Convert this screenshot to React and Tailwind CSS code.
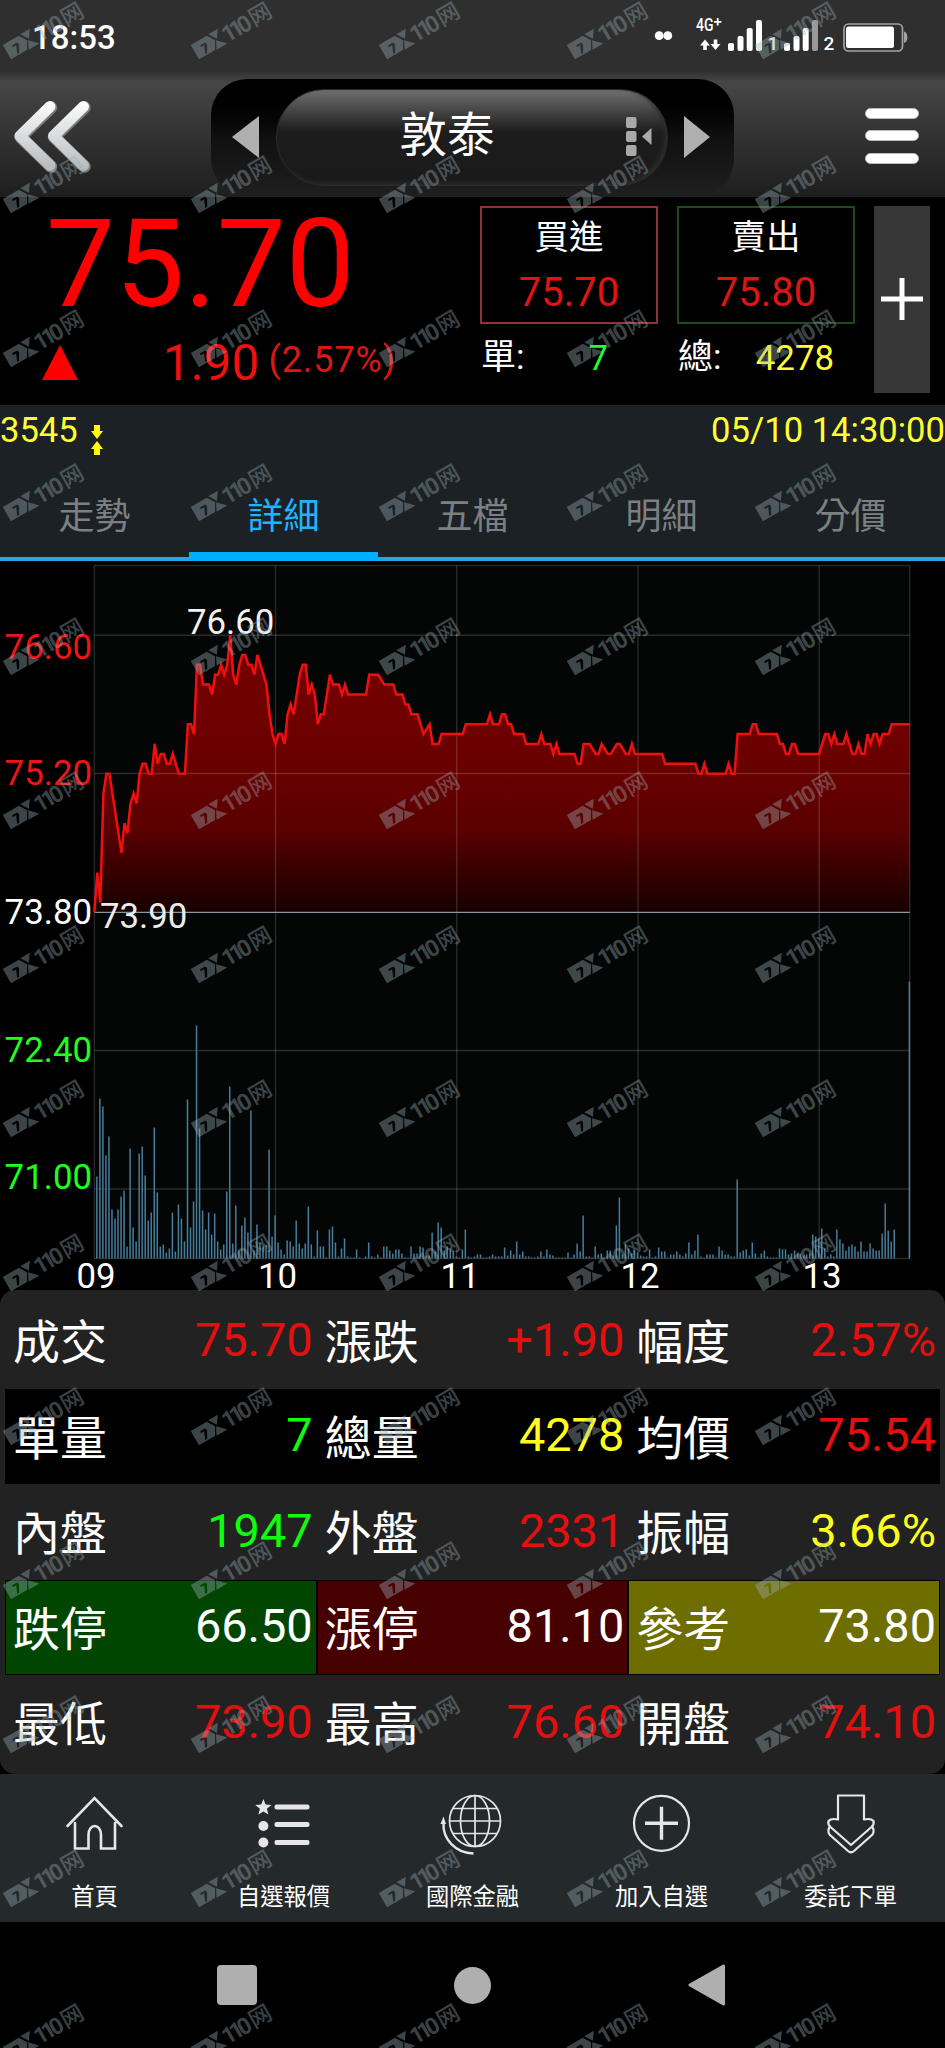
import { Fragment } from 'react'

const TABS = ['走勢', '詳細', '五檔', '明細', '分價']
const ACTIVE_TAB = '詳細'

const RED = 'text-[#e60f0f]'
const GREEN = 'text-[#0dff0d]'
const YELLOW = 'text-[#ffff1e]'
const WHITE = 'text-white'

const ROWS = [
  { cls: '', cells: [
    { label: '成交', value: '75.70', color: RED },
    { label: '漲跌', value: '+1.90', color: RED },
    { label: '幅度', value: '2.57%', color: RED },
  ] },
  { cls: 'bg-black', cells: [
    { label: '單量', value: '7', color: GREEN },
    { label: '總量', value: '4278', color: YELLOW },
    { label: '均價', value: '75.54', color: RED },
  ] },
  { cls: '', cells: [
    { label: '內盤', value: '1947', color: GREEN },
    { label: '外盤', value: '2331', color: RED },
    { label: '振幅', value: '3.66%', color: YELLOW },
  ] },
  { cls: 'bg-black', cells: [
    { label: '跌停', value: '66.50', color: WHITE, bg: 'border border-black bg-[#004600]' },
    { label: '漲停', value: '81.10', color: WHITE, bg: 'border border-black bg-[#460000]' },
    { label: '參考', value: '73.80', color: WHITE, bg: 'border border-black bg-[#6e6e00]' },
  ] },
  { cls: '', cells: [
    { label: '最低', value: '73.90', color: RED },
    { label: '最高', value: '76.60', color: RED },
    { label: '開盤', value: '74.10', color: RED },
  ] },
]

// [minutes since 09:00, price]
const PRICES = [
  [0, 73.8], [1, 74.2], [2, 73.9], [3, 75], [4, 75.2], [5, 75.2], [9, 74.4], [10, 74.7], [11, 74.6], [12, 74.9],
  [13, 75], [14, 74.9], [15, 75.2], [16, 75.3], [17, 75.3], [18, 75.2], [19, 75.2], [20, 75.5], [21, 75.3], [22, 75.4],
  [23, 75.4], [24, 75.3], [25, 75.3], [26, 75.4], [27, 75.3], [28, 75.2], [30, 75.2], [31, 75.7], [32, 75.7], [33, 75.6],
  [34, 76.3], [35, 76.3], [36, 76.1], [38, 76.1], [39, 76], [40, 76.2], [41, 76.2], [42, 76.3], [43, 76.2], [44, 76.3],
  [45, 76.6], [46, 76.2], [47, 76.1], [48, 76.3], [49, 76.4], [50, 76.4], [51, 76.3], [52, 76.3], [53, 76.2], [54, 76.4],
  [57, 76.1], [58, 75.8], [59, 75.6], [60, 75.5], [61, 75.6], [62, 75.6], [63, 75.5], [64, 75.8], [65, 75.9], [66, 75.8],
  [67, 76], [68, 76.2], [69, 76.3], [70, 76.3], [71, 76], [72, 76.1], [73, 76], [74, 75.7], [75, 75.8], [76, 75.8],
  [77, 76], [78, 76.2], [79, 76.1], [81, 76.1], [82, 76], [83, 76.1], [84, 76], [90, 76], [91, 76.2], [94, 76.2],
  [96, 76.1], [99, 76.1], [100, 76], [102, 76], [103, 75.9], [104, 75.9], [105, 75.8], [107, 75.8], [109, 75.6], [111, 75.7],
  [112, 75.5], [114, 75.5], [115, 75.6], [122, 75.6], [123, 75.7], [130, 75.7], [131, 75.8], [132, 75.7], [134, 75.7],
  [135, 75.8], [136, 75.8], [137, 75.7], [138, 75.7], [139, 75.6], [142, 75.6], [143, 75.5], [147, 75.5], [148, 75.6],
  [149, 75.5], [151, 75.5], [152, 75.4], [153, 75.5], [154, 75.4], [159, 75.4], [160, 75.3], [161, 75.3], [162, 75.5],
  [164, 75.5], [166, 75.4], [167, 75.4], [168, 75.5], [170, 75.4], [171, 75.4], [173, 75.5], [174, 75.5], [176, 75.4],
  [177, 75.4], [178, 75.5], [179, 75.4], [188, 75.4], [189, 75.3], [199, 75.3], [200, 75.2], [201, 75.2], [202, 75.3],
  [203, 75.2], [209, 75.2], [210, 75.3], [211, 75.2], [212, 75.2], [213, 75.6], [217, 75.6], [218, 75.7], [219, 75.7],
  [220, 75.6], [226, 75.6], [227, 75.5], [228, 75.5], [229, 75.4], [230, 75.4], [231, 75.5], [232, 75.5], [233, 75.4],
  [240, 75.4], [242, 75.6], [243, 75.6], [244, 75.5], [245, 75.6], [246, 75.5], [248, 75.5], [249, 75.6], [251, 75.4],
  [252, 75.4], [253, 75.5], [254, 75.4], [255, 75.4], [256, 75.6], [257, 75.5], [258, 75.6], [259, 75.6], [260, 75.5],
  [261, 75.6], [263, 75.6], [264, 75.7], [270, 75.7],
]

// one bar per minute, starting at 09:01
const VOLUMES = [
  82, 160, 152, 103, 122, 49, 40, 49, 62, 68, 12, 110, 31, 17, 105, 112, 83, 38, 46, 131,
  66, 12, 14, 6, 10, 46, 7, 54, 40, 17, 159, 31, 57, 233, 130, 48, 29, 46, 24, 45,
  17, 9, 14, 67, 172, 15, 53, 8, 33, 41, 26, 148, 8, 34, 15, 12, 13, 109, 22, 43,
  16, 9, 4, 18, 17, 12, 38, 15, 10, 15, 52, 14, 2, 28, 12, 12, 1, 29, 32, 16,
  2, 10, 20, 2, 1, 1, 9, 1, 0, 2, 16, 2, 1, 4, 1, 12, 12, 8, 5, 9,
  9, 5, 1, 1, 12, 5, 5, 12, 11, 3, 3, 26, 7, 36, 31, 8, 12, 10, 8, 2,
  1, 9, 29, 2, 1, 2, 4, 4, 1, 1, 2, 4, 2, 2, 2, 11, 3, 8, 4, 17,
  4, 7, 2, 2, 1, 1, 2, 7, 2, 9, 4, 3, 1, 1, 1, 1, 6, 1, 4, 15,
  7, 43, 2, 2, 1, 12, 4, 5, 1, 8, 8, 3, 33, 61, 4, 14, 10, 5, 8, 6,
  3, 2, 2, 9, 1, 2, 11, 7, 7, 1, 4, 4, 7, 4, 2, 5, 16, 4, 8, 24,
  2, 1, 4, 4, 4, 1, 12, 8, 4, 4, 2, 2, 79, 6, 8, 9, 3, 16, 5, 1,
  5, 8, 2, 1, 1, 1, 10, 9, 9, 4, 5, 8, 5, 5, 3, 4, 5, 24, 22, 20,
  30, 10, 2, 4, 2, 29, 19, 15, 8, 12, 14, 12, 7, 17, 7, 7, 15, 10, 8, 8,
  25, 55, 28, 17, 29, 0, 0, 0, 0, 277,
]

const LEFT = 94.3
const RIGHT = 909.8
const TOP = 4.5
const BOTTOM = 697.5
const BASE = 351.3

const xAt = m => LEFT + m * ((RIGHT - LEFT) / 270)
const yAt = p => BASE - (p - 73.8) * 99

const AXIS = [
  { text: '76.60', y: 98, cls: 'fill-[#f01414]' },
  { text: '75.20', y: 224, cls: 'fill-[#f01414]' },
  { text: '73.80', y: 363, cls: 'fill-white' },
  { text: '72.40', y: 501, cls: 'fill-[#1eff1e]' },
  { text: '71.00', y: 628, cls: 'fill-[#1eff1e]' },
]

const HOURS = [
  { text: '09', x: 96 },
  { text: '10', x: 277.5 },
  { text: '11', x: 460 },
  { text: '12', x: 640 },
  { text: '13', x: 822 },
]

function StatusBar() {
  return (
    <div className="flex h-[72px] items-center justify-between bg-[#2f2f2f] pl-[32px]">
      <span className="mt-[3px] text-[33px] font-medium leading-none text-white">18:53</span>
      <svg className="h-[72px] w-[305px]" viewBox="640 0 305 72" fill="#fff">
        <circle cx="659.2" cy="35.7" r="4.4" />
        <circle cx="667.8" cy="35.7" r="4.4" />
        <text x="696" y="30.6" fontSize="17.5" fontWeight="500" textLength="17.5" lengthAdjust="spacingAndGlyphs">4G</text>
        <path d="M714 21.8h7.4M717.7 18v7.6" stroke="#fff" strokeWidth="1.8" />
        <path d="M705 39.5l5 6h-3.2v4.5h-3.6v-4.5h-3.2zM715.5 50l-5-6h3.2v-4.5h3.6v4.5h3.2z" />
        <rect x="728" y="43" width="6" height="8" rx="2" />
        <rect x="737.5" y="36" width="6" height="15" rx="2" />
        <rect x="746.7" y="28" width="6" height="23" rx="2" />
        <rect x="756" y="20" width="6" height="31" rx="2" />
        <text x="767.5" y="50" fontSize="19" fontWeight="500">1</text>
        <rect x="784" y="43" width="6" height="8" rx="2" />
        <rect x="793.5" y="36" width="6" height="15" rx="2" />
        <rect x="802.7" y="28" width="6" height="23" rx="2" />
        <rect x="812" y="20" width="6" height="31" rx="2" fill="#999" />
        <text x="823.5" y="50" fontSize="19" fontWeight="500">2</text>
        <rect x="844" y="24" width="58.5" height="27" rx="4.5" fill="none" stroke="#a3a3a3" strokeWidth="1.7" />
        <rect x="846" y="26.5" width="48" height="21.5" rx="2.5" />
        <path d="M904 31.5c4.5 1 4.5 10.5 0 11.5z" fill="#a3a3a3" />
      </svg>
    </div>
  )
}

function Header() {
  return (
    <div className="flex h-[126px] items-center justify-between border-b border-black bg-linear-to-b from-[#333] via-[#464646] via-8% to-[#1e1e1e]">
      <svg className="mt-[2px] h-[80px] w-[211px]" viewBox="0 96 211 80" fill="none" strokeLinecap="round" strokeLinejoin="round">
        <defs>
          <linearGradient id="chev" gradientUnits="userSpaceOnUse" x1="0" y1="100" x2="0" y2="172">
            <stop offset="0" stopColor="#fff" />
            <stop offset="1" stopColor="#b4b8ba" />
          </linearGradient>
        </defs>
        <path d="M51 107.500L20.500 137l30.500 29.500M84.500 107.500L54 137l30.500 29.500" stroke="#7d7d7d" strokeWidth="12.5" />
        <path d="M50 106.500L20 136l30 29.500M83.500 106.500L53.500 136l30 29.500" stroke="url(#chev)" strokeWidth="11" />
      </svg>
      <div className="mt-[5px] flex h-[116px] w-[523px] items-center justify-between rounded-[36px] bg-linear-to-b from-black via-[#101010] via-50% to-[#1f1f1f] pr-[24px] pl-[21px]">
        <svg className="h-[42px] w-[27px]" viewBox="0 0 27 42"><path d="M0 21L27 0v42z" fill="#b0b0b0" /></svg>
        <div className="flex h-[97px] w-[392px] items-center justify-end rounded-[48px] border border-[#2c2c2c] bg-linear-to-b from-[#707070] via-[#1c1c1c] via-45% to-[#1a1a1a] pr-[15px] shadow-[inset_-3px_-2px_4px_#2c2c2c]">
          <span className="mr-[131px] text-[47.500px] leading-none text-white">敦泰</span>
          <svg className="h-[40px] w-[26px]" viewBox="0 0 26 40" fill="#a9a9a9">
            <rect y="0" width="10.5" height="11" rx="2" />
            <rect y="14" width="10.5" height="11" rx="2" />
            <rect y="28" width="10.5" height="11" rx="2" />
            <path d="M16 19.500L25.500 11v17z" />
          </svg>
        </div>
        <svg className="h-[42px] w-[26px]" viewBox="0 0 26 42"><path d="M26 21L0 0v42z" fill="#b0b0b0" /></svg>
      </div>
      <div className="mt-[2px] flex w-[211px] flex-col items-end gap-[11.500px] pr-[26px]">
        {[0, 1, 2].map(i => <div key={i} className="h-[11px] w-[54px] rounded-full border border-[#bbb] bg-white" />)}
      </div>
    </div>
  )
}

function PriceBox({ label, value, border, small, amount, amountCls }) {
  return (
    <div className="w-[178px]">
      <div className={`flex h-[118px] flex-col items-center border-2 ${border}`}>
        <span className="mt-[6px] text-[34.500px] leading-[46px] text-white">{label}</span>
        <span className="mt-[8px] text-[40px] leading-[50px] text-[#e01414]">{value}</span>
      </div>
      <div className="flex h-[69px] items-center justify-between pr-[21px] text-[34.800px]">
        <span className="pl-px text-[35px] text-white">{small}</span>
        <span className={amountCls}>{amount}</span>
      </div>
    </div>
  )
}

function Quote() {
  return (
    <div className="flex h-[207px] bg-black">
      <div className="w-[480px]">
        <div className="pt-[2px] pl-[46px] text-[123px] leading-[128px] text-[#ff0000]">75.70</div>
        <div className="flex h-[68px] items-center text-[#f01010]">
          <svg className="ml-[42px] h-[35px] w-[36px]" viewBox="0 0 36 35"><path d="M18 0l18 35H0z" fill="#f00" /></svg>
          <span className="mt-[3px] ml-[85px] text-[49.500px] leading-none">1.90</span>
          <span className="mb-[5px] ml-[9px] text-[36px] leading-none tracking-[0.9px] text-[#d81818]">(2.57%)</span>
        </div>
      </div>
      <div className="flex gap-[19px] pt-[7.500px]">
        <PriceBox label="買進" value="75.70" border="border-[#8a3636]" small="單:" amount="7" amountCls="pr-[29px] text-[#1eff2d]" />
        <PriceBox label="賣出" value="75.80" border="border-[#1c4a1a]" small="總:" amount="4278" amountCls="text-[#ffff32]" />
        <div className="flex h-[187px] w-[56px] items-center justify-center bg-[#373737]">
          <svg className="h-[42px] w-[42px]" viewBox="0 0 42 42"><path d="M21 0v42M0 21h42" stroke="#fff" strokeWidth="5" /></svg>
        </div>
      </div>
    </div>
  )
}

function Tabs() {
  return (
    <div className="flex h-[156px] flex-col bg-[#1b2124]">
      <div className="flex h-[51px] items-center justify-between text-[34.600px] leading-none text-[#ffff32]">
        <span className="flex items-center">
          3545
          <svg className="mt-[18px] ml-[13px] h-[30px] w-[12px]" viewBox="0 0 12 30" fill="#ff0">
            <path d="M3 0h6v6h3L6 14 0 6h3zM3 30h6v-6h3l-6-8-6 8h3z" />
          </svg>
        </span>
        <span>05/10 14:30:00</span>
      </div>
      <div className="flex flex-1 border-b-4 border-[#1fa9e8]">
        {TABS.map(tab => (
          <div
            key={tab}
            className={`-mb-1 flex flex-1 items-center justify-center pt-[25px] text-[36px] leading-none ${tab === ACTIVE_TAB ? 'border-b-[9px] border-[#00aeff] pb-0 text-[#1eb4ff]' : 'pb-[9px] text-[#7c8082]'}`}
          >
            {tab}
          </div>
        ))}
      </div>
    </div>
  )
}

function Chart() {
  const line = PRICES.map(([m, p]) => `${xAt(m).toFixed(1)},${yAt(p).toFixed(1)}`).join(' ')
  return (
    <svg className="relative z-10 block h-[729px] w-[945px] overflow-visible" viewBox="0 0 945 729" fontSize="34.8">
      <defs>
        <linearGradient id="area" gradientUnits="userSpaceOnUse" x1="0" y1="75" x2="0" y2={BASE}>
          <stop offset="0" stopColor="#780000" />
          <stop offset="0.5" stopColor="#680000" />
          <stop offset="0.7" stopColor="#5a0000" />
          <stop offset="1" stopColor="#160000" />
        </linearGradient>
      </defs>
      <rect x={LEFT} y={TOP} width={RIGHT - LEFT} height={BOTTOM - TOP} fill="#040606" />
      <polygon points={`${LEFT},${BASE} ${line} ${RIGHT},${BASE}`} fill="url(#area)" />
      <g stroke="#fff" strokeOpacity="0.15" strokeWidth="1.4">
        {[TOP, 74.3, 212.5, 489.5, 628, BOTTOM].map(y => <path key={y} d={`M${LEFT} ${y}H${RIGHT}`} />)}
        {[0, 60, 120, 180, 240, 270].map(m => <path key={m} d={`M${xAt(m)} ${TOP}V${BOTTOM}`} />)}
      </g>
      <path d={`M${LEFT} ${BASE}H${RIGHT}`} stroke="#8b969c" strokeWidth="1.3" />
      <polyline points={line} fill="none" stroke="#f00f0f" strokeWidth="2.5" />
      <g fill="#467c9c">
        {VOLUMES.map((v, i) => <rect key={i} x={xAt(i + 1) - 1.2} y={BOTTOM - v} width="1.5" height={v} />)}
      </g>
      {AXIS.map(a => <text key={a.text} x="92" y={a.y} textAnchor="end" className={a.cls}>{a.text}</text>)}
      <text x="187" y="73" fill="#f2f2f2">76.60</text>
      <text x="100" y="367" fill="#ececec">73.90</text>
      {HOURS.map(h => <text key={h.text} x={h.x} y="727" textAnchor="middle" fill="#fff">{h.text}</text>)}
    </svg>
  )
}

function Details() {
  return (
    <div className="h-[484px] bg-black">
      <div className="h-[484px] rounded-[15px] bg-[#222] px-[5px] pt-[3px]">
        {ROWS.map((row, i) => (
          <div key={i} className={`grid h-[95.500px] grid-cols-3 ${row.cls}`}>
            {row.cells.map(c => (
              <div key={c.label} className={`flex items-center justify-between leading-none ${c.bg ? `pr-[3px] pl-[7px] ${c.bg}` : 'pr-[4px] pl-[8px]'}`}>
                <span className="pt-[4px] text-[47px] text-white">{c.label}</span>
                <span className={`pb-px text-[46.900px] ${c.color}`}>{c.value}</span>
              </div>
            ))}
          </div>
        ))}
      </div>
    </div>
  )
}

const NAV = [
  {
    label: '首頁',
    icon: (
      <path d="M67.500 52L94.500 24l27 28M75 49v25.500h13.500V61c0-12 12.500-12 12.500 0v13.500h14V49" strokeWidth="2.6" strokeLinecap="round" />
    ),
  },
  {
    label: '自選報價',
    icon: (
      <g fill="#e6e6e6" stroke="none">
        <path d="M74.400 25l2.200 5.600 5.900.4-4.600 3.800 1.500 5.800-5-3.200-5 3.200 1.500-5.800-4.600-3.800 5.900-.4z" />
        <circle cx="74.4" cy="52" r="5" />
        <circle cx="74.4" cy="68.5" r="5" />
        <rect x="85.5" y="30.5" width="35" height="5" rx="2" />
        <rect x="85.5" y="48" width="35" height="5" rx="2" />
        <rect x="85.5" y="66" width="35" height="5" rx="2" />
      </g>
    ),
  },
  {
    label: '國際金融',
    icon: (
      <Fragment>
        <circle cx="97" cy="47" r="25.5" />
        <ellipse cx="97" cy="47" rx="14.5" ry="25.5" />
        <path d="M97 21.500v51M71.500 47h51M75 34.500h44M75 59.500h44" />
        <path d="M65.500 49c-1 16 12 30 30 30.500" strokeWidth="2.4" />
        <path d="M62.500 50l3-7.500 2.500 7.500z" fill="#e6e6e6" stroke="none" />
      </Fragment>
    ),
  },
  {
    label: '加入自選',
    icon: (
      <Fragment>
        <circle cx="94.5" cy="49.3" r="27.5" strokeWidth="2.2" />
        <path d="M94.500 32.800v33M78 49.300h33" strokeWidth="3.4" />
      </Fragment>
    ),
  },
  {
    label: '委託下單',
    icon: (
      <Fragment>
        <path d="M82 21.500h26v24q7-1.500 9.500 1.500 1 3-2 6L95 71 74.500 53q-3-3-2-6 2.500-3 9.500-1.500z" strokeWidth="2.2" strokeLinejoin="round" />
        <path d="M74 52.500q-3 4-.5 8L92 77q3 2.500 6 0l18.500-16.500q2.500-4-.5-8" strokeWidth="2.2" />
      </Fragment>
    ),
  },
]

function BottomNav() {
  return (
    <div className="flex h-[148px] bg-[#24292c]">
      {NAV.map(item => (
        <div key={item.label} className="flex flex-1 flex-col items-center pt-[15px]">
          <svg className="h-[70px] w-[90px]" viewBox="50 15 90 70" fill="none" stroke="#e6e6e6" strokeWidth="1.7">{item.icon}</svg>
          <span className="mt-[22px] text-[23.300px] leading-[32px] text-white">{item.label}</span>
        </div>
      ))}
    </div>
  )
}

function SystemNav() {
  return (
    <div className="flex h-[126px] items-center justify-center gap-[197px] bg-black pr-[3px]">
      <div className="h-[40px] w-[40px] rounded-[4px] bg-[#afafaf]" />
      <div className="h-[37px] w-[37px] rounded-full bg-[#afafaf]" />
      <svg className="h-[42px] w-[37px]" viewBox="0 0 37 42"><path d="M2 21L35.500 2v38z" fill="#afafaf" stroke="#afafaf" strokeWidth="3" strokeLinejoin="round" /></svg>
    </div>
  )
}

function Mark({ x, y }) {
  return (
    <g transform={`translate(${x + 7} ${y + 57.3}) rotate(-30)`}>
      <path
        fillRule="evenodd"
        d="M0-16.500H18.500L23.500-8.500 18.500 0H0zM8-11.500 7.500-9.500H11.500L8-1.500H10.300L14.500-9 13.800-11.500z"
      />
      <path d="M20.500-17H31.500L25.800-8.800zM24.300-8L32.500.5H20z" />
      <text x="32.5" y="0" fontSize="23" fontWeight="700" textLength="31" lengthAdjust="spacing">110</text>
      <text x="64" y="-.5" fontSize="22.5" fontWeight="500">网</text>
    </g>
  )
}

function Watermark() {
  return (
    <svg className="pointer-events-none absolute inset-0 z-20 h-[2048px] w-[945px]" viewBox="0 0 945 2048" fill="#9aaeb6" fillOpacity="0.39">
      {Array.from({ length: 14 }, (_, r) =>
        Array.from({ length: 5 }, (_, c) => <Mark key={`${r}-${c}`} x={4 + c * 188} y={2 + r * 154} />)
      )}
    </svg>
  )
}

export default function App() {
  return (
    <div className="relative h-[2048px] w-[945px] overflow-hidden bg-black font-[Roboto,'Noto_Sans_CJK_TC',sans-serif]">
      <StatusBar />
      <Header />
      <Quote />
      <Tabs />
      <Chart />
      <Details />
      <BottomNav />
      <SystemNav />
      <Watermark />
    </div>
  )
}
